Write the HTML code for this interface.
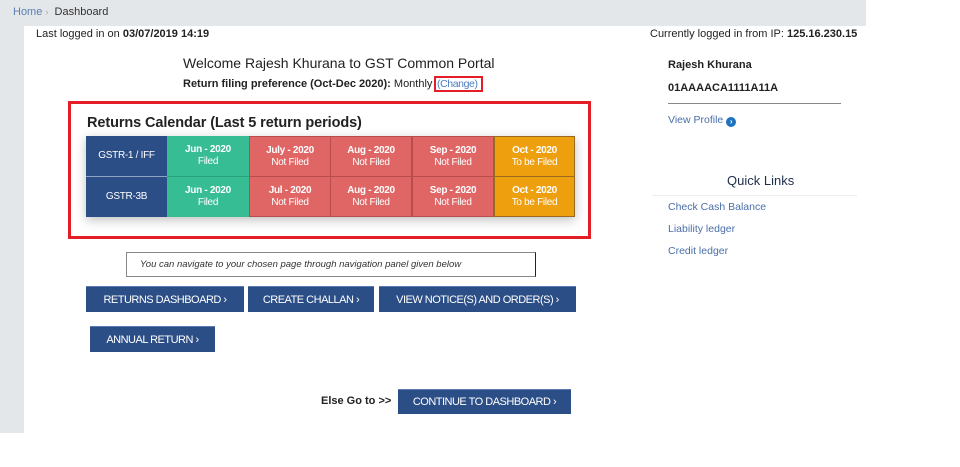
<!DOCTYPE html>
<html><head><meta charset="utf-8"><style>
*{margin:0;padding:0;box-sizing:border-box}
body{width:960px;height:467px;background:#fff;font-family:"Liberation Sans",sans-serif;position:relative;overflow:hidden;color:#222}
.a{position:absolute;white-space:nowrap}
.gray{background:#e4e7ea;position:absolute}
.cell{position:absolute;color:#fff;font-size:10px;text-align:center;line-height:12px;display:flex;flex-direction:column;justify-content:center;align-items:center;font-weight:bold;letter-spacing:-0.3px}
.cell span{font-weight:normal}
.btn{position:absolute;background:#2c4e86;color:#fff;font-size:11px;display:flex;align-items:center;justify-content:center;letter-spacing:-0.5px;border-top:1px solid #5a7ab0}
</style></head><body>
<div class="gray" style="left:0;top:0;width:866px;height:26px"></div>
<div class="gray" style="left:0;top:0;width:24px;height:433px"></div>
<div class="a" style="left:13px;top:6px;font-size:11px;color:#5a7fb5">Home <span style="color:#aaa;font-size:9px">›</span> <span style="color:#333">&nbsp;Dashboard</span></div>
<div class="a" style="left:36px;top:28px;font-size:11px">Last logged in on <b>03/07/2019 14:19</b></div>
<div class="a" style="left:650px;top:28px;font-size:11px">Currently logged in from IP: <b>125.16.230.15</b></div>
<div class="a" style="left:183px;top:55px;font-size:14px;color:#222">Welcome Rajesh Khurana to GST Common Portal</div>
<div class="a" style="left:183px;top:78px;font-size:11px"><b>Return filing preference (Oct-Dec 2020):</b> Monthly</div>
<div class="a" style="left:434px;top:76px;width:49px;height:16px;border:2px solid #e41e26;font-size:10.5px;color:#4a7cc0;padding-left:1px;line-height:12px;letter-spacing:-0.4px">(Change)</div>
<div class="a" style="left:68px;top:101px;width:523px;height:138px;border:3px solid #e41e26"></div>
<div class="a" style="left:87px;top:115px;font-size:14.5px;font-weight:bold;letter-spacing:-0.1px">Returns Calendar (Last 5 return periods)</div>
<div class="a" style="left:86px;top:136px;width:489px;height:81px;box-shadow:0 3px 10px rgba(0,0,0,.25)"></div>
<div class="cell" style="left:86px;top:136px;width:81px;height:41px;background:#2c4e86;border-bottom:1px solid #8fa3c7"><span>GSTR-1 / IFF</span></div>
<div class="cell" style="left:86px;top:177px;width:81px;height:40px;background:#2c4e86"><span>GSTR-3B</span></div>
<div class="cell" style="left:167px;top:136px;width:82px;height:41px;background:#36bd93;border-bottom:1px solid #2aa07b">Jun - 2020<span>Filed</span></div>
<div class="cell" style="left:167px;top:177px;width:82px;height:40px;background:#36bd93">Jun - 2020<span>Filed</span></div>
<div class="cell" style="left:249px;top:136px;width:82px;height:41px;background:#e06666;border:1px solid #b94c4c">July - 2020<span>Not Filed</span></div>
<div class="cell" style="left:249px;top:177px;width:82px;height:40px;background:#e06666;border:1px solid #b94c4c;border-top:0">Jul - 2020<span>Not Filed</span></div>
<div class="cell" style="left:330px;top:136px;width:82px;height:41px;background:#e06666;border:1px solid #b94c4c">Aug - 2020<span>Not Filed</span></div>
<div class="cell" style="left:330px;top:177px;width:82px;height:40px;background:#e06666;border:1px solid #b94c4c;border-top:0">Aug - 2020<span>Not Filed</span></div>
<div class="cell" style="left:412px;top:136px;width:82px;height:41px;background:#e06666;border:1px solid #b94c4c">Sep - 2020<span>Not Filed</span></div>
<div class="cell" style="left:412px;top:177px;width:82px;height:40px;background:#e06666;border:1px solid #b94c4c;border-top:0">Sep - 2020<span>Not Filed</span></div>
<div class="cell" style="left:494px;top:136px;width:81px;height:41px;background:#ee9f0e;border:1px solid #9a6a20">Oct - 2020<span>To be Filed</span></div>
<div class="cell" style="left:494px;top:177px;width:81px;height:40px;background:#ee9f0e;border:1px solid #9a6a20;border-top:0">Oct - 2020<span>To be Filed</span></div>
<div class="a" style="left:126px;top:252px;width:410px;height:25px;border:1px solid #888;border-right:1px solid #222;font-size:9.5px;font-style:italic;padding:6px 0 0 13px;color:#333">You can navigate to your chosen page through navigation panel given below</div>
<div class="btn" style="left:86px;top:286px;width:158px;height:26px">RETURNS DASHBOARD ›</div>
<div class="btn" style="left:248px;top:286px;width:126px;height:26px">CREATE CHALLAN ›</div>
<div class="btn" style="left:379px;top:286px;width:197px;height:26px">VIEW NOTICE(S) AND ORDER(S) ›</div>
<div class="btn" style="left:90px;top:326px;width:125px;height:26px">ANNUAL RETURN ›</div>
<div class="a" style="left:321px;top:395px;font-size:11px;font-weight:bold">Else Go to &gt;&gt;</div>
<div class="btn" style="left:398px;top:389px;width:173px;height:25px">CONTINUE TO DASHBOARD ›</div>
<div class="a" style="left:668px;top:59px;font-size:11px;font-weight:bold">Rajesh Khurana</div>
<div class="a" style="left:668px;top:82px;font-size:11px;font-weight:bold">01AAAACA1111A11A</div>
<div class="a" style="left:668px;top:103px;width:173px;height:1px;background:#888"></div>
<div class="a" style="left:668px;top:114px;font-size:10.5px;color:#4a6fa8">View Profile <span style="display:inline-block;width:10px;height:10px;border-radius:50%;background:#1e73be;color:#fff;font-size:8px;line-height:10px;text-align:center;font-weight:bold;vertical-align:-1px">›</span></div>
<div class="a" style="left:727px;top:173px;font-size:13px;color:#1f2d4a">Quick Links</div>
<div class="a" style="left:652px;top:195px;width:205px;height:1px;background:#eee"></div>
<div class="a" style="left:668px;top:201px;font-size:10.5px;color:#4a6fa8">Check Cash Balance</div>
<div class="a" style="left:668px;top:223px;font-size:10.5px;color:#4a6fa8">Liability ledger</div>
<div class="a" style="left:668px;top:245px;font-size:10.5px;color:#4a6fa8">Credit ledger</div>
</body></html>
